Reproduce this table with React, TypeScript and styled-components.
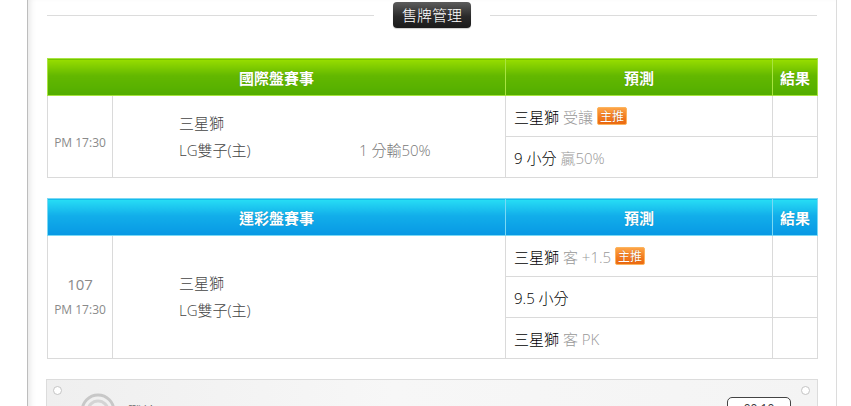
import React from "react";
import styled, { createGlobalStyle } from "styled-components";

const Global = createGlobalStyle`
  html, body { margin: 0; padding: 0; background: #fff; }
  body { font-family: "Open Sans", "Noto Sans CJK TC", sans-serif; overflow: hidden; }
`;

const Wrapper = styled.div`
  margin-left: 27px;
  min-height: 420px;
  border-left: 1px solid #bdbdbd;
  border-right: 1px solid #dcdcdc;
  box-shadow: inset 6px 0 6px -4px rgba(0, 0, 0, 0.1);
  padding: 2px 19px 0 19px;
  box-sizing: content-box;
  width: 770px;
`;

const TitleRow = styled.div`
  display: flex;
  align-items: center;
  gap: 19px;
  height: 26px;
  margin-bottom: 30px;
`;

const Line = styled.div`
  flex: 1;
  height: 1px;
  background: #dcdcdc;
`;

const TitleBadge = styled.div`
  height: 26px;
  line-height: 25px;
  padding: 0 9px;
  border-radius: 4px;
  background: linear-gradient(#5c5c5c, #2a2a2a 55%, #1a1a1a);
  color: #fff;
  font-family: "Noto Sans CJK TC", sans-serif;
  font-size: 15px;
  font-weight: 300;
  box-shadow: 0 1px 1px rgba(0, 0, 0, 0.2);
`;

type Theme = "green" | "blue";

const Table = styled.table`
  width: 770px;
  table-layout: fixed;
  border-collapse: collapse;
  margin-bottom: 20px;
`;

const HeadCell = styled.th<{ $theme: Theme }>`
  height: 36px;
  padding: 0;
  color: #fff;
  font-family: "Noto Sans CJK TC", sans-serif;
  font-weight: bold;
  font-size: 15px;
  text-align: center;
  text-shadow: 0 0 1px rgba(0, 0, 0, 0.25);
  background: ${(p) =>
    p.$theme === "green"
      ? "linear-gradient(#98dd00, #63b800 45%, #52ad00)"
      : "linear-gradient(#27def5, #12aeea 45%, #0898e4)"};
  border: 1px solid ${(p) => (p.$theme === "green" ? "#a8e440" : "#7ad9f4")};
`;

const Cell = styled.td`
  height: 40px;
  padding: 0;
  border: 1px solid #dadada;
  vertical-align: middle;
`;

const TimeCell = styled(Cell)<{ $offset?: number }>`
  text-align: center;
  color: #8a8a8a;
  padding-top: ${(p) => p.$offset ?? 0}px;
`;

const Num = styled.div`
  font-size: 15px;
  line-height: 26px;
`;

const Time = styled.div`
  font-size: 12px;
  line-height: 26px;
`;

const TeamCell = styled(Cell)`
  color: #444;
`;

const TeamGrid = styled.div`
  display: grid;
  grid-template-columns: 180px auto;
  padding-left: 66px;
  font-size: 15px;
  line-height: 27px;
  font-weight: 300;
`;

const TeamName = styled.span<{ $row: number }>`
  grid-column: 1;
  grid-row: ${(p) => p.$row};
`;

const Handicap = styled.span`
  color: #777;
  grid-column: 2;
  grid-row: 2;
`;

const PredictCell = styled(Cell)`
  padding-left: 8px;
  font-size: 15px;
  font-weight: 300;
  color: #000;
  white-space: nowrap;
`;

const Gray = styled.span`
  color: #999;
`;

const Star = styled.span`
  display: inline-block;
  vertical-align: 2px;
  height: 16px;
  line-height: 16px;
  padding: 0 2px;
  margin-left: 4px;
  border: 1px solid #fcb45e;
  border-radius: 2px;
  background: linear-gradient(#fda446, #f37a1f 60%, #ec6a10);
  color: #fff;
  font-family: "Noto Sans CJK TC", sans-serif;
  font-size: 12px;
  font-weight: 400;
  text-shadow: 0 0 1px rgba(120, 40, 0, 0.6);
`;

const Panel = styled.div`
  position: relative;
  margin: 0 -1px;
  height: 60px;
  border: 1px solid #dcdcdc;
  background: linear-gradient(90deg, #efefef, #f7f7f7 45%, #f4f4f4);
  display: flex;
  align-items: flex-start;
  padding: 13px 26px 0 33px;
  gap: 12px;
`;

const Dot = styled.span<{ $side: "left" | "right" }>`
  position: absolute;
  top: 6px;
  ${(p) => (p.$side === "left" ? "left: 6px;" : "right: 7px;")}
  width: 7px;
  height: 7px;
  border-radius: 50%;
  border: 1px solid #c4c4c4;
  background: #fff;
`;

const PanelText = styled.span`
  margin-top: 8px;
  color: #666;
  font-family: "Noto Sans CJK TC", sans-serif;
  font-size: 14px;
  flex: 1;
`;

const PanelButton = styled.span`
  margin-top: 4px;
  width: 62px;
  height: 22px;
  border: 1px solid #444;
  border-radius: 5px;
  background: #fff;
  font-size: 12px;
  color: #333;
  text-align: center;
  line-height: 22px;
`;

function Rings() {
  return (
    <svg width="36" height="36" viewBox="0 0 36 36">
      <circle cx="18" cy="18" r="16" fill="none" stroke="#c8c8c8" strokeWidth="3" />
      <circle cx="18" cy="18" r="10" fill="none" stroke="#d4d4d4" strokeWidth="3" />
      <circle cx="18" cy="18" r="4" fill="#dcdcdc" />
    </svg>
  );
}

function Header({ theme, title }: { theme: Theme; title: string }) {
  return (
    <tr>
      <HeadCell $theme={theme} colSpan={2}>{title}</HeadCell>
      <HeadCell $theme={theme}>預測</HeadCell>
      <HeadCell $theme={theme}>結果</HeadCell>
    </tr>
  );
}

function Cols() {
  return (
    <colgroup>
      <col style={{ width: 65 }} />
      <col style={{ width: 393 }} />
      <col style={{ width: 267 }} />
      <col style={{ width: 45 }} />
    </colgroup>
  );
}

export default function App() {
  return (
    <>
      <Global />
      <Wrapper>
        <TitleRow>
          <Line />
          <TitleBadge>售牌管理</TitleBadge>
          <Line />
        </TitleRow>

        <Table>
          <Cols />
          <thead>
            <Header theme="green" title="國際盤賽事" />
          </thead>
          <tbody>
            <tr>
              <TimeCell rowSpan={2} $offset={12}>
                <Time>PM 17:30</Time>
              </TimeCell>
              <TeamCell rowSpan={2}>
                <TeamGrid>
                  <TeamName $row={1}>三星獅</TeamName>
                  <TeamName $row={2}>LG雙子(主)</TeamName>
                  <Handicap>1 分輸50%</Handicap>
                </TeamGrid>
              </TeamCell>
              <PredictCell>
                三星獅 <Gray>受讓</Gray>
                <Star>主推</Star>
              </PredictCell>
              <Cell />
            </tr>
            <tr>
              <PredictCell>
                9 小分 <Gray>贏50%</Gray>
              </PredictCell>
              <Cell />
            </tr>
          </tbody>
        </Table>

        <Table>
          <Cols />
          <thead>
            <Header theme="blue" title="運彩盤賽事" />
          </thead>
          <tbody>
            <tr>
              <TimeCell rowSpan={3}>
                <Num>107</Num>
                <Time>PM 17:30</Time>
              </TimeCell>
              <TeamCell rowSpan={3}>
                <TeamGrid>
                  <TeamName $row={1}>三星獅</TeamName>
                  <TeamName $row={2}>LG雙子(主)</TeamName>
                </TeamGrid>
              </TeamCell>
              <PredictCell>
                三星獅 <Gray>客 +1.5</Gray>
                <Star>主推</Star>
              </PredictCell>
              <Cell />
            </tr>
            <tr>
              <PredictCell>9.5 小分</PredictCell>
              <Cell />
            </tr>
            <tr>
              <PredictCell>
                三星獅 <Gray>客 PK</Gray>
              </PredictCell>
              <Cell />
            </tr>
          </tbody>
        </Table>

        <Panel>
          <Dot $side="left" />
          <Dot $side="right" />
          <Rings />
          <PanelText>戰績</PanelText>
          <PanelButton>00:10</PanelButton>
        </Panel>
      </Wrapper>
    </>
  );
}
